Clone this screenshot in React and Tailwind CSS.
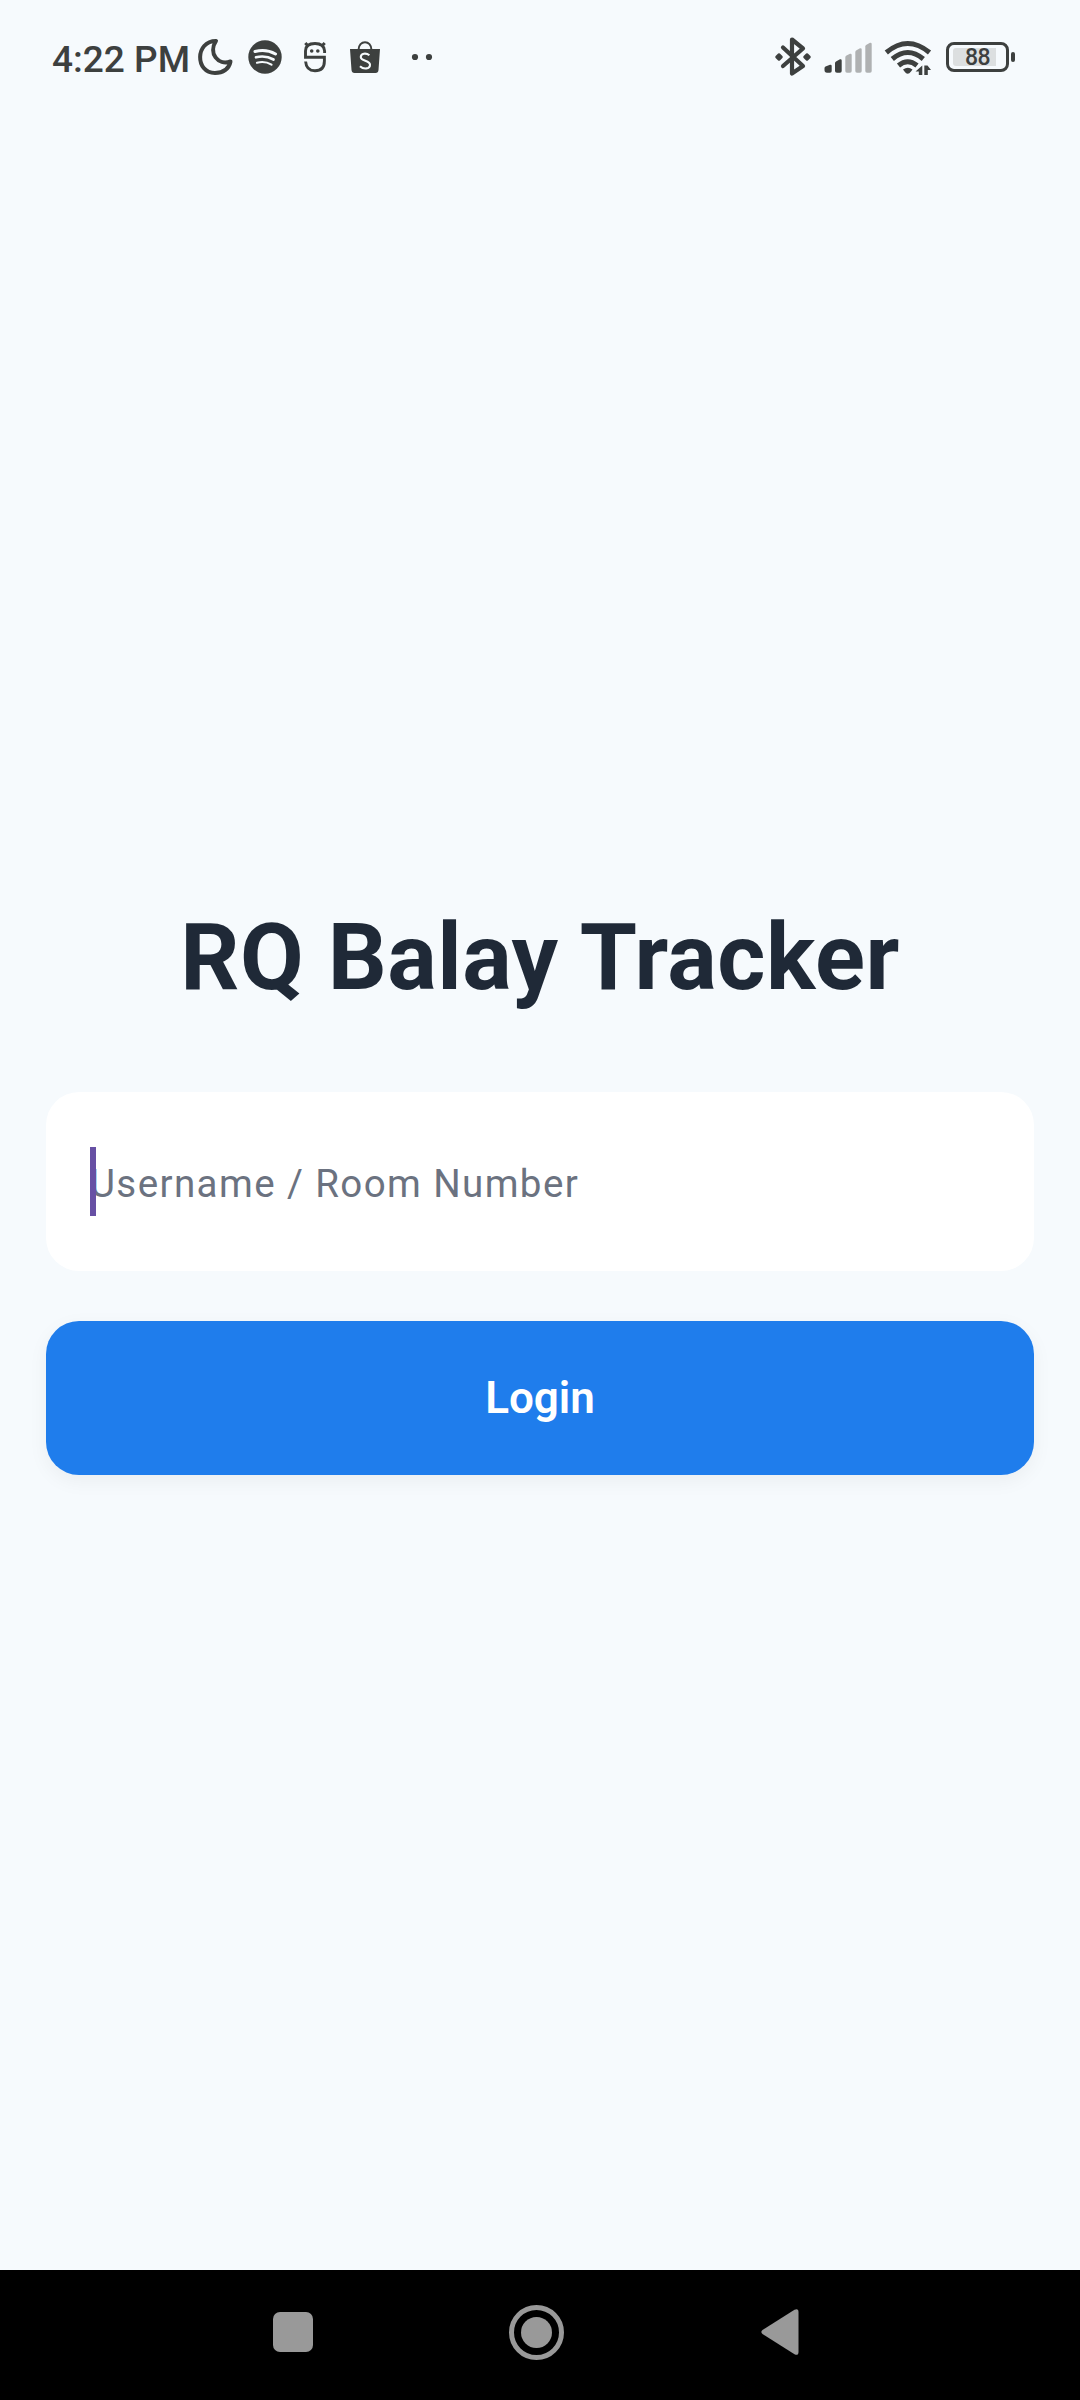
const INK = "#3d403f";

function StatusBar() {
  return (
    <header className="flex h-[114px] items-center pl-[52px] pr-[65px] font-[Roboto,sans-serif] text-[#3d403f]">
      <span className="w-[140px] whitespace-nowrap text-[37px] leading-[44px] font-medium pt-[5px]">4:22 PM</span>
      <svg className="-ml-px shrink-0" width="46" height="46" viewBox="191 34 46 46" fill="none">
        <path d="M216 41C195 41 195 73 215 73C223 73 229 69 230.500 61.500C218 66 208 53 216 41Z" stroke={INK} strokeWidth="4" strokeLinejoin="round" />
      </svg>
      <svg className="ml-[9px] shrink-0" width="38" height="46" viewBox="246 34 38 46" fill="none">
        <circle cx="265" cy="57" r="16.7" fill={INK} />
        <g stroke="#f6fafd" strokeLinecap="round">
          <path d="M255 51.500Q266 48.500 275.500 54" strokeWidth="3" />
          <path d="M256 57.300Q265.500 55 273.500 59.500" strokeWidth="2.700" />
          <path d="M257 62.700Q265 60.700 271.500 64.600" strokeWidth="2.200" />
        </g>
      </svg>
      <svg className="ml-[16px] shrink-0" width="30" height="46" viewBox="300 34 30 46" fill="none" stroke={INK}>
        <path d="M324.600 53V51Q324 43.500 315 43.500Q305.500 43.500 305.500 51V57.200H324.400V61Q324.400 70.800 315 70.800Q306.300 70.800 305.600 61.500" strokeWidth="2.900" />
        <path d="M305.300 43L308.500 46.500M324.700 43L321.500 46.500" strokeWidth="3" />
        <circle cx="311.700" cy="51" r="1.800" fill={INK} stroke="none" />
        <circle cx="317.800" cy="51" r="1.800" fill={INK} stroke="none" />
      </svg>
      <svg className="ml-[18px] shrink-0" width="34" height="46" viewBox="348 34 34 46">
        <path d="M350 49H380L378.500 70Q378.300 73 375.500 73H354.500Q351.800 73 351.500 70Z" fill={INK} />
        <path d="M358.500 50C358.500 39.500 371.500 39.500 371.500 50" fill="none" stroke={INK} strokeWidth="2" />
        <path d="M369.400 55.300C366 52.500 360.800 53.300 360.800 57C360.800 61.500 370 60 370 64.700C370 69.300 363.500 69.500 360 66.200" fill="none" stroke="#f6fafd" strokeWidth="2.100" />
      </svg>
      <svg className="ml-[28px] shrink-0" width="26" height="46" viewBox="410 34 26 46" fill={INK}>
        <circle cx="415" cy="57" r="3.100" />
        <circle cx="429" cy="57" r="3.100" />
      </svg>
      <div className="ml-auto flex items-center">
        <svg className="shrink-0" width="40" height="46" viewBox="773 34 40 46" fill="none">
          <path d="M783 47.500L803 66L792 73.500V39.500L803 48.500L783 66" stroke={INK} strokeWidth="4.200" strokeLinecap="round" strokeLinejoin="round" />
          <path d="M776.500 57L779 54.500L781.500 57L779 59.500ZM804.500 57L807 54.500L809.500 57L807 59.500Z" fill={INK} stroke={INK} strokeWidth="2.500" strokeLinejoin="round" />
        </svg>
        <svg className="ml-[9px] shrink-0" width="52" height="46" viewBox="822 34 52 46">
          <path d="M824.500 70V68Q824.500 67 825.500 66.500L830 64.800Q831.700 64.500 831.700 66V71Q831.700 72.800 830 72.800H827Q824.500 72.800 824.500 70Z" fill={INK} />
          <path d="M835 71V63Q835 62 836 61.500L840 59.300Q841.700 59 841.700 60.500V71Q841.700 72.800 840 72.800H837Q835 72.800 835 71Z" fill={INK} />
          <g fill="#afb1b2">
            <path d="M845.300 71V57.500Q845.300 56 846.500 55.500L850 53.800Q851.700 53.500 851.700 55V71Q851.700 72.800 850 72.800H847Q845.300 72.800 845.300 71Z" />
            <path d="M855.300 71V52Q855.300 51 856.500 50.200L860 48.200Q861.700 48 861.700 49.500V71Q861.700 72.800 860 72.800H857Q855.300 72.800 855.300 71Z" />
            <path d="M865.300 71V46.500Q865.300 45.500 866.500 44.700L870 42.700Q871.700 42.500 871.700 44V71Q871.700 72.800 870 72.800H867Q865.300 72.800 865.300 71Z" />
          </g>
        </svg>
        <svg className="ml-[9px] shrink-0" width="50" height="46" viewBox="883 34 50 46" fill="none">
          <g stroke={INK} strokeWidth="5">
            <path d="M886.300 52.500Q907.700 34.500 929.500 52.500" />
            <path d="M892.300 59Q907.800 46 923.300 59" />
            <path d="M898.500 65.500Q907.700 58 917 65.500" />
          </g>
          <path d="M903 69.500Q908 66 912.500 69.500L911 71.500Q907.700 76 904.500 71.500Z" fill={INK} />
          <path d="M922.300 65.500V75H918.800V71.500H915.500ZM924.300 75V65.500H927.500L931 70H927.800V75Z" fill={INK} />
        </svg>
        <div className="ml-[13px] flex items-center">
          <div className="flex h-[30px] w-[63px] items-center rounded-[8px] border-[3px] border-[#3d403f] pl-[4px]">
            <div className="flex h-[18px] w-[43px] items-center justify-center rounded-l-[3px] bg-[#dcdfe0] pt-[2px] pl-[6px] text-[23px] leading-[18px] font-medium tracking-[-0.5px]">88</div>
          </div>
          <div className="ml-[2px] h-[10px] w-[4px] rounded-[2px] bg-[#3d403f]" />
        </div>
      </div>
    </header>
  );
}

function LoginForm() {
  return (
    <main className="flex flex-1 flex-col px-[46px] pt-[789px]">
      <h1 className="h-[110px] text-center text-[92.500px] leading-[110px] font-bold tracking-[0.500px] whitespace-nowrap text-[#1f2937]">
        RQ Balay Tracker
      </h1>
      <div className="relative mt-[79px] flex h-[179px] items-center rounded-[33px] bg-white pl-[44px]">
        <span className="pt-[3px] text-[38.500px] leading-[55px] tracking-[1.410px] text-[#6b7280]">Username / Room Number</span>
        <span className="absolute top-[55px] left-[44px] h-[68.600px] w-[5.600px] bg-[#6750a4]" />
      </div>
      <button className="mt-[49.700px] h-[154px] w-full rounded-[33px] bg-[#1f7dec] pt-[1px] text-[44px] leading-[55px] font-semibold text-white shadow-[0_6px_20px_rgba(0,0,0,0.05)]">
        Login
      </button>
    </main>
  );
}

function NavigationBar() {
  return (
    <nav className="flex h-[130px] items-center bg-black pb-[6px] pl-[273px]">
      <div className="h-[40px] w-[40px] rounded-[7px] bg-[#999999]" />
      <div className="ml-[196px] flex h-[55px] w-[55px] items-center justify-center rounded-full border-[5px] border-[#999999]">
        <div className="h-[31px] w-[31px] rounded-full bg-[#999999]" />
      </div>
      <svg className="ml-[197px]" width="38" height="46" viewBox="0 0 38 46" fill="#999999">
        <path d="M1.500 21L33.500 0.700Q37.500 -1 37.500 3V43Q37.500 47 33.500 45.300L1.500 25Q-0.800 23 1.500 21Z" />
      </svg>
    </nav>
  );
}

export default function App() {
  return (
    <div className="flex h-[2400px] w-[1080px] flex-col overflow-hidden bg-[#f6fafd] font-[Roboto,sans-serif]">
      <StatusBar />
      <LoginForm />
      <NavigationBar />
    </div>
  );
}
